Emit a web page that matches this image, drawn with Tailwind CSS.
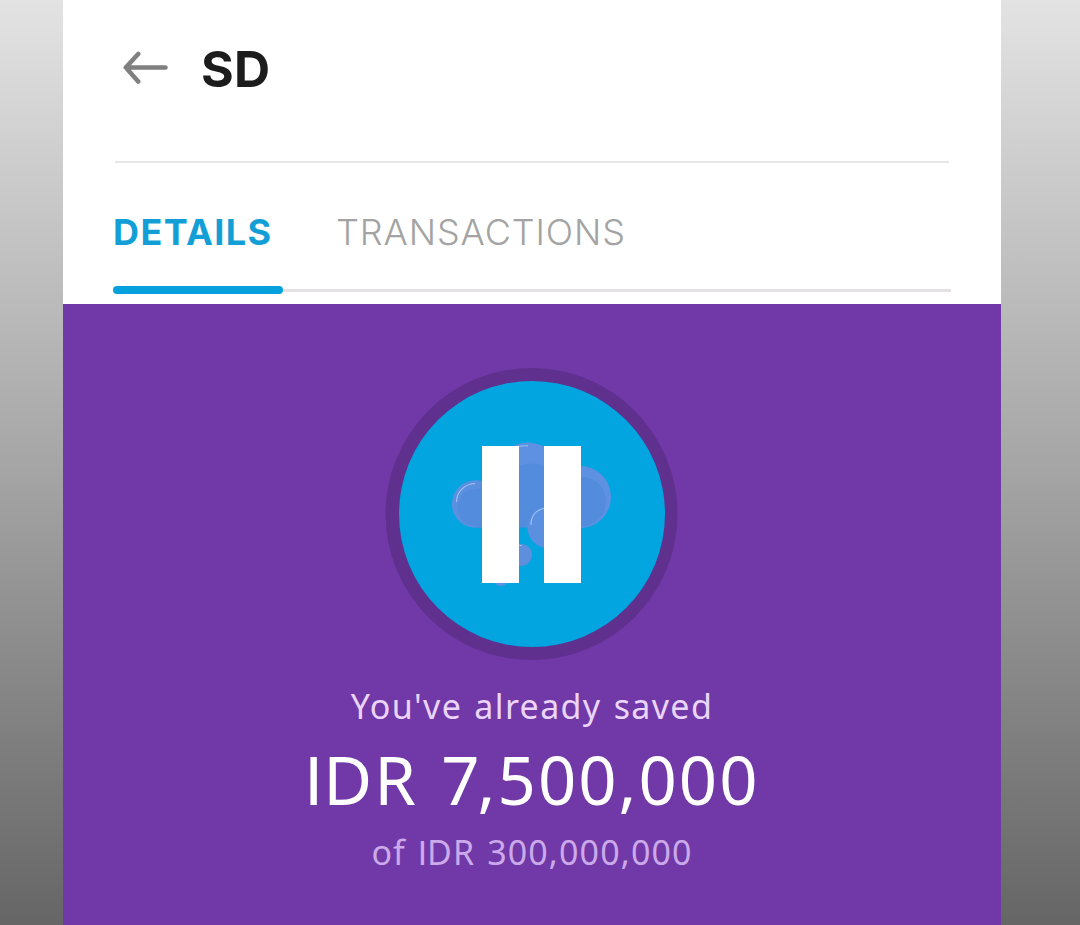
<!DOCTYPE html>
<html lang="en">
<head>
  <meta charset="UTF-8" />
  <title>SD</title>
  <script src="https://cdn.jsdelivr.net/npm/@tailwindcss/browser@4"></script>
</head>
<body class="h-[925px] overflow-hidden bg-linear-to-b from-[#e3e3e3] via-[#a6a6a6] to-[#666666]">
  <div class="ml-[63px] w-[938px] h-full flex flex-col bg-white">
    <!-- Header -->
    <header class="h-[161px] shrink-0 pl-[60px] pt-[39px] flex items-start font-['Inter',sans-serif]">
      <svg class="mt-[12px] w-[46px] h-[34px]" viewBox="0 0 46 34" fill="none" stroke="#808080" stroke-width="4.6" stroke-linecap="round" stroke-linejoin="round">
        <path d="M42.5 16.5H3M15.2 3L2.8 16.5L15.2 30.5" />
      </svg>
      <h1 class="ml-[32px] text-[50px] leading-[60px] font-bold tracking-[0.3px] text-[#1c1c1c]">SD</h1>
    </header>
    <div class="ml-[52px] w-[834px] h-[2px] shrink-0 bg-[#e6e6e6]"></div>

    <!-- Tabs -->
    <nav class="h-[141px] shrink-0 ml-[50px] w-[838px] flex flex-col font-['Inter',sans-serif] text-[36px] leading-[44px]">
      <div class="h-[123px] pt-[47px] flex whitespace-nowrap">
        <a class="w-[223px] font-bold tracking-[1.4px] text-[#139fd6]">DETAILS</a>
        <a class="font-[350] tracking-[0.9px] text-[#a3a3a3]">TRANSACTIONS</a>
      </div>
      <div class="h-[8px] flex items-center">
        <div class="w-[170px] h-[8px] rounded-full bg-[#06a0dc]"></div>
        <div class="flex-1 h-[3px] bg-[#e5e0e3]"></div>
      </div>
    </nav>

    <!-- Savings -->
    <main class="flex-1 flex flex-col items-center pt-[64px] bg-[#7039a7] font-['Noto_Sans',sans-serif] text-center whitespace-nowrap">
      <svg class="w-[292px] h-[292px] shrink-0 overflow-visible" viewBox="386 368 292 292" fill="none">
        <circle cx="531.5" cy="514" r="146" fill="#5f308d" />
        <circle cx="532" cy="514" r="133" fill="#02a5e0" />
        <!-- cloud -->
        <circle cx="475.5" cy="504" r="23.7" fill="#5b90e1" />
        <circle cx="528" cy="477" r="34.5" fill="#5e91e1" />
        <circle cx="580" cy="497" r="31" fill="#5e91e1" />
        <circle cx="476" cy="507.5" r="18.5" fill="#538cdd" />
        <circle cx="581" cy="501.5" r="25" fill="#538cdd" />
        <path d="M476 527.5V490l30-18c14-11 40-11 54 0l20 10v45.5z" fill="#538cdd" />
        <circle cx="548" cy="527.5" r="20.5" fill="#5b90e1" />
        <circle cx="521" cy="555" r="11" fill="#5d8fdc" />
        <circle cx="501" cy="578" r="8" fill="#5e91e1" />
        <path d="M456.5 502c0-10 8-18 18.5-18.5M531 525c0-9 5-15 13-16.5M512 449c4-2.5 9-3.5 16-3.2M518 545.5h4" stroke="#a0c0f0" stroke-width="1.2" />
        <path d="M482 446h37v137h-37zM544 446h37v137h-37z" fill="#fff" />
      </svg>
      <p class="mt-[23px] text-[34px] leading-[46px] tracking-[1.35px] [word-spacing:2px] text-[#ecd5fb]">You've already saved</p>
      <p class="mt-[4px] text-[67px] leading-[92px] tracking-[2px] text-white"><span class="font-['Roboto',sans-serif] tracking-[0.5px]">I</span>DR <span class="ml-[4px] tracking-[-2px]">7</span>,500,000</p>
      <p class="mt-px text-[34px] leading-[46px] tracking-[1.1px] [word-spacing:2px] text-[#cba9ea]">of <span class="font-['Roboto',sans-serif] tracking-[0px]">I</span>DR 300,000,000</p>
    </main>
  </div>
</body>
</html>
